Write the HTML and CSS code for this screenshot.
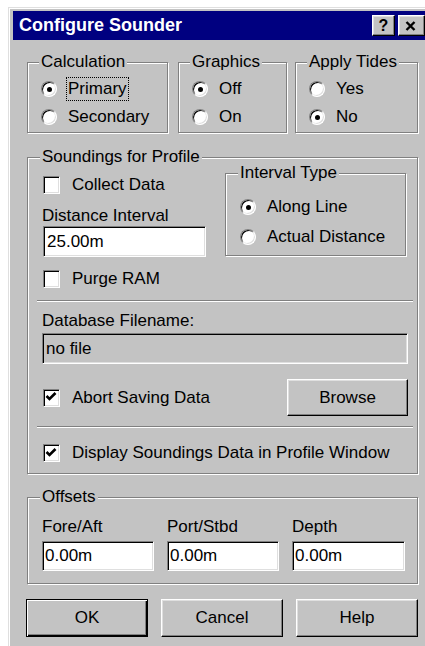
FILE: index.html
```html
<!DOCTYPE html>
<html lang="en">
<head>
<meta charset="utf-8">
<title>Configure Sounder</title>
<link rel="stylesheet" href="styles.css">
</head>
<body>
<div class="dialog">
  <div class="titlebar">
    <span class="title">Configure Sounder</span>
    <div class="caption-buttons">
      <span class="cap-btn">?</span>
      <span class="cap-btn close">
        <svg width="11" height="10" viewBox="0 0 11 10"><path d="M1.5 1 L9.5 9 M9.5 1 L1.5 9" stroke="#000" stroke-width="2.4" fill="none"/></svg>
      </span>
    </div>
  </div>

  <div class="client">
    <div class="top-groups">
      <fieldset class="group g-calc">
        <legend>Calculation</legend>
        <div class="option"><span class="radio checked"></span><span class="focus">Primary</span></div>
        <div class="option"><span class="radio"></span><span>Secondary</span></div>
      </fieldset>
      <fieldset class="group g-graphics">
        <legend>Graphics</legend>
        <div class="option"><span class="radio checked"></span><span>Off</span></div>
        <div class="option"><span class="radio"></span><span>On</span></div>
      </fieldset>
      <fieldset class="group g-tides">
        <legend>Apply Tides</legend>
        <div class="option"><span class="radio"></span><span>Yes</span></div>
        <div class="option"><span class="radio checked"></span><span>No</span></div>
      </fieldset>
    </div>

    <fieldset class="group soundings">
      <legend>Soundings for Profile</legend>
      <div class="upper">
        <div class="left-col">
          <div class="check-row first"><span class="check"></span><span>Collect Data</span></div>
          <div class="field-label">Distance Interval</div>
          <div class="edit dist">25.00m</div>
          <div class="check-row purge"><span class="check"></span><span>Purge RAM</span></div>
        </div>
        <fieldset class="group interval">
          <legend>Interval Type</legend>
          <div class="option wide"><span class="radio checked"></span><span>Along Line</span></div>
          <div class="option wide"><span class="radio"></span><span>Actual Distance</span></div>
        </fieldset>
      </div>
      <div class="sep"></div>
      <div class="field-label db">Database Filename:</div>
      <div class="edit disabled">no file</div>
      <div class="abort-row">
        <div class="check-row"><span class="check"><svg width="15" height="15" viewBox="0 0 15 15"><path d="M2.5 6 L5.5 9 L11.5 3" stroke="#000" stroke-width="2.6" fill="none"/></svg></span><span>Abort Saving Data</span></div>
        <span class="btn browse">Browse</span>
      </div>
      <div class="sep second"></div>
      <div class="check-row display"><span class="check"><svg width="15" height="15" viewBox="0 0 15 15"><path d="M2.5 6 L5.5 9 L11.5 3" stroke="#000" stroke-width="2.6" fill="none"/></svg></span><span>Display Soundings Data in Profile Window</span></div>
    </fieldset>

    <fieldset class="group offsets">
      <legend>Offsets</legend>
      <div class="offset-grid">
        <div class="field-label">Fore/Aft</div>
        <div class="field-label">Port/Stbd</div>
        <div class="field-label">Depth</div>
        <div class="edit small">0.00m</div>
        <div class="edit small">0.00m</div>
        <div class="edit small">0.00m</div>
      </div>
    </fieldset>

    <div class="buttons">
      <span class="btn default">OK</span>
      <span class="btn">Cancel</span>
      <span class="btn">Help</span>
    </div>
  </div>
</div>
</body>
</html>
```

FILE: styles.css
```css
html {
  overflow: hidden;
}

body {
  margin: 7px 0 0 8px;
  background: #fff;
  font-family: "Liberation Sans", Arial, sans-serif;
  font-size: 17px;
  color: #000;
}

/* window frame */
.dialog {
  width: 414px;
  background: #c3c3c3;
  border: 1px solid;
  border-color: #dfdfdf #000 #000 #dfdfdf;
  box-shadow: inset 1px 1px #fff, inset -1px -1px #808080;
  padding: 3px 3px 3px 4px;
}

.titlebar {
  height: 29px;
  background: #000080;
  display: flex;
  align-items: center;
  justify-content: space-between;
  padding: 0 2px 0 6px;
}

.title {
  color: #fff;
  font-weight: bold;
  font-size: 18px;
}

.caption-buttons {
  display: flex;
  gap: 3px;
}

.cap-btn {
  box-sizing: border-box;
  width: 23px;
  height: 21px;
  background: #c3c3c3;
  border: 1px solid;
  border-color: #fff #000 #000 #fff;
  box-shadow: inset -1px -1px #808080, inset 1px 1px #dfdfdf;
  display: flex;
  align-items: center;
  justify-content: center;
  font-weight: bold;
  font-size: 16px;
  line-height: 1;
}

.cap-btn.close {
  width: 27px;
  justify-content: flex-start;
  padding-left: 6px;
}

.client {
  padding: 12px 9px 20px 14px;
}

/* etched group boxes */
.group {
  margin: 0;
  min-width: 0;
  border: 1px solid #808080;
  box-shadow: 1px 1px 0 #fff, inset 1px 1px 0 #fff;
  padding: 3px 0 1px 13px;
}

.group legend {
  padding: 0 2px;
  margin-left: -2px;
  line-height: 20px;
  background: #c3c3c3;
}

.top-groups {
  display: flex;
}

.g-calc { width: 141px; box-sizing: border-box; }
.g-graphics { width: 109px; box-sizing: border-box; margin-left: 10px; }
.g-tides { width: 123px; box-sizing: border-box; margin-left: 8px; }

.option {
  display: flex;
  align-items: center;
  gap: 11px;
  height: 28px;
}

.option.wide {
  height: 30px;
}

.radio {
  box-sizing: border-box;
  width: 16px;
  height: 16px;
  flex: none;
  border-radius: 50%;
  background: #fff;
  border: 1px solid;
  border-color: #808080 #fff #fff #808080;
  box-shadow: inset 1px 1px #000, inset -1px -1px #dfdfdf;
  display: grid;
  place-items: center;
}

.radio.checked::after {
  content: "";
  width: 5px;
  height: 5px;
  border-radius: 50%;
  background: #000;
}

.focus {
  outline: 1px dotted #000;
  outline-offset: 1px;
}

/* soundings group */
.soundings {
  margin-top: 14px;
  padding: 0 9px 8px 14px;
}

.upper {
  display: flex;
  justify-content: space-between;
  align-items: flex-start;
}

.left-col {
  width: 163px;
}

.interval {
  width: 181px;
  box-sizing: border-box;
  margin: -4px 2px 0 0;
  padding: 9px 0 3px 14px;
}

.check-row {
  display: flex;
  align-items: center;
  gap: 12px;
  height: 24px;
  padding-left: 1px;
}

.check-row.first { margin-top: 6px; }
.check-row.purge { margin-top: 10px; }
.check-row.display { margin-top: 13px; }

.check {
  box-sizing: border-box;
  width: 17px;
  height: 18px;
  flex: none;
  background: #fff;
  border: 1px solid;
  border-color: #808080 #fff #fff #808080;
  box-shadow: inset 1px 1px #000, inset -1px -1px #dfdfdf;
  display: grid;
  place-items: center;
}

.field-label {
  line-height: 20px;
  margin-top: 9px;
}

.edit {
  box-sizing: border-box;
  height: 31px;
  background: #fff;
  border: 1px solid;
  border-color: #808080 #fff #fff #808080;
  box-shadow: inset 1px 1px #000, inset -1px -1px #dfdfdf;
  padding: 0 3px;
  display: flex;
  align-items: center;
}

.edit.dist {
  width: 163px;
  margin-left: 1px;
}

.edit.disabled {
  background: #c3c3c3;
  margin-top: 2px;
}

.sep {
  border-top: 1px solid #808080;
  border-bottom: 1px solid #fff;
  margin: 9px -5px 0;
}

.sep.second {
  margin-top: 10px;
}

.abort-row {
  display: flex;
  align-items: center;
  justify-content: space-between;
  height: 37px;
  margin-top: 15px;
}

/* push buttons */
.btn {
  box-sizing: border-box;
  height: 38px;
  background: #c3c3c3;
  border: 1px solid;
  border-color: #fff #000 #000 #fff;
  box-shadow: inset -1px -1px #808080, inset 1px 1px #dfdfdf;
  display: flex;
  align-items: center;
  justify-content: center;
}

.btn.browse {
  width: 121px;
  height: 37px;
}

.btn.default {
  border-color: #000;
  box-shadow: inset 1px 1px #fff, inset -1px -1px #000, inset -2px -2px #808080;
}

/* offsets group */
.offsets {
  margin-top: 13px;
  padding: 10px 12px 12px 14px;
}

.offset-grid {
  display: grid;
  grid-template-columns: 112px 112px 113px;
  column-gap: 13px;
}

.offset-grid .field-label {
  margin-top: 0;
}

.edit.small {
  height: 30px;
  margin-top: 4px;
  padding-left: 2px;
}

.buttons {
  display: grid;
  grid-template-columns: 122px 122px 122px;
  column-gap: 13px;
  margin: 15px 0 0 -1px;
}
```
